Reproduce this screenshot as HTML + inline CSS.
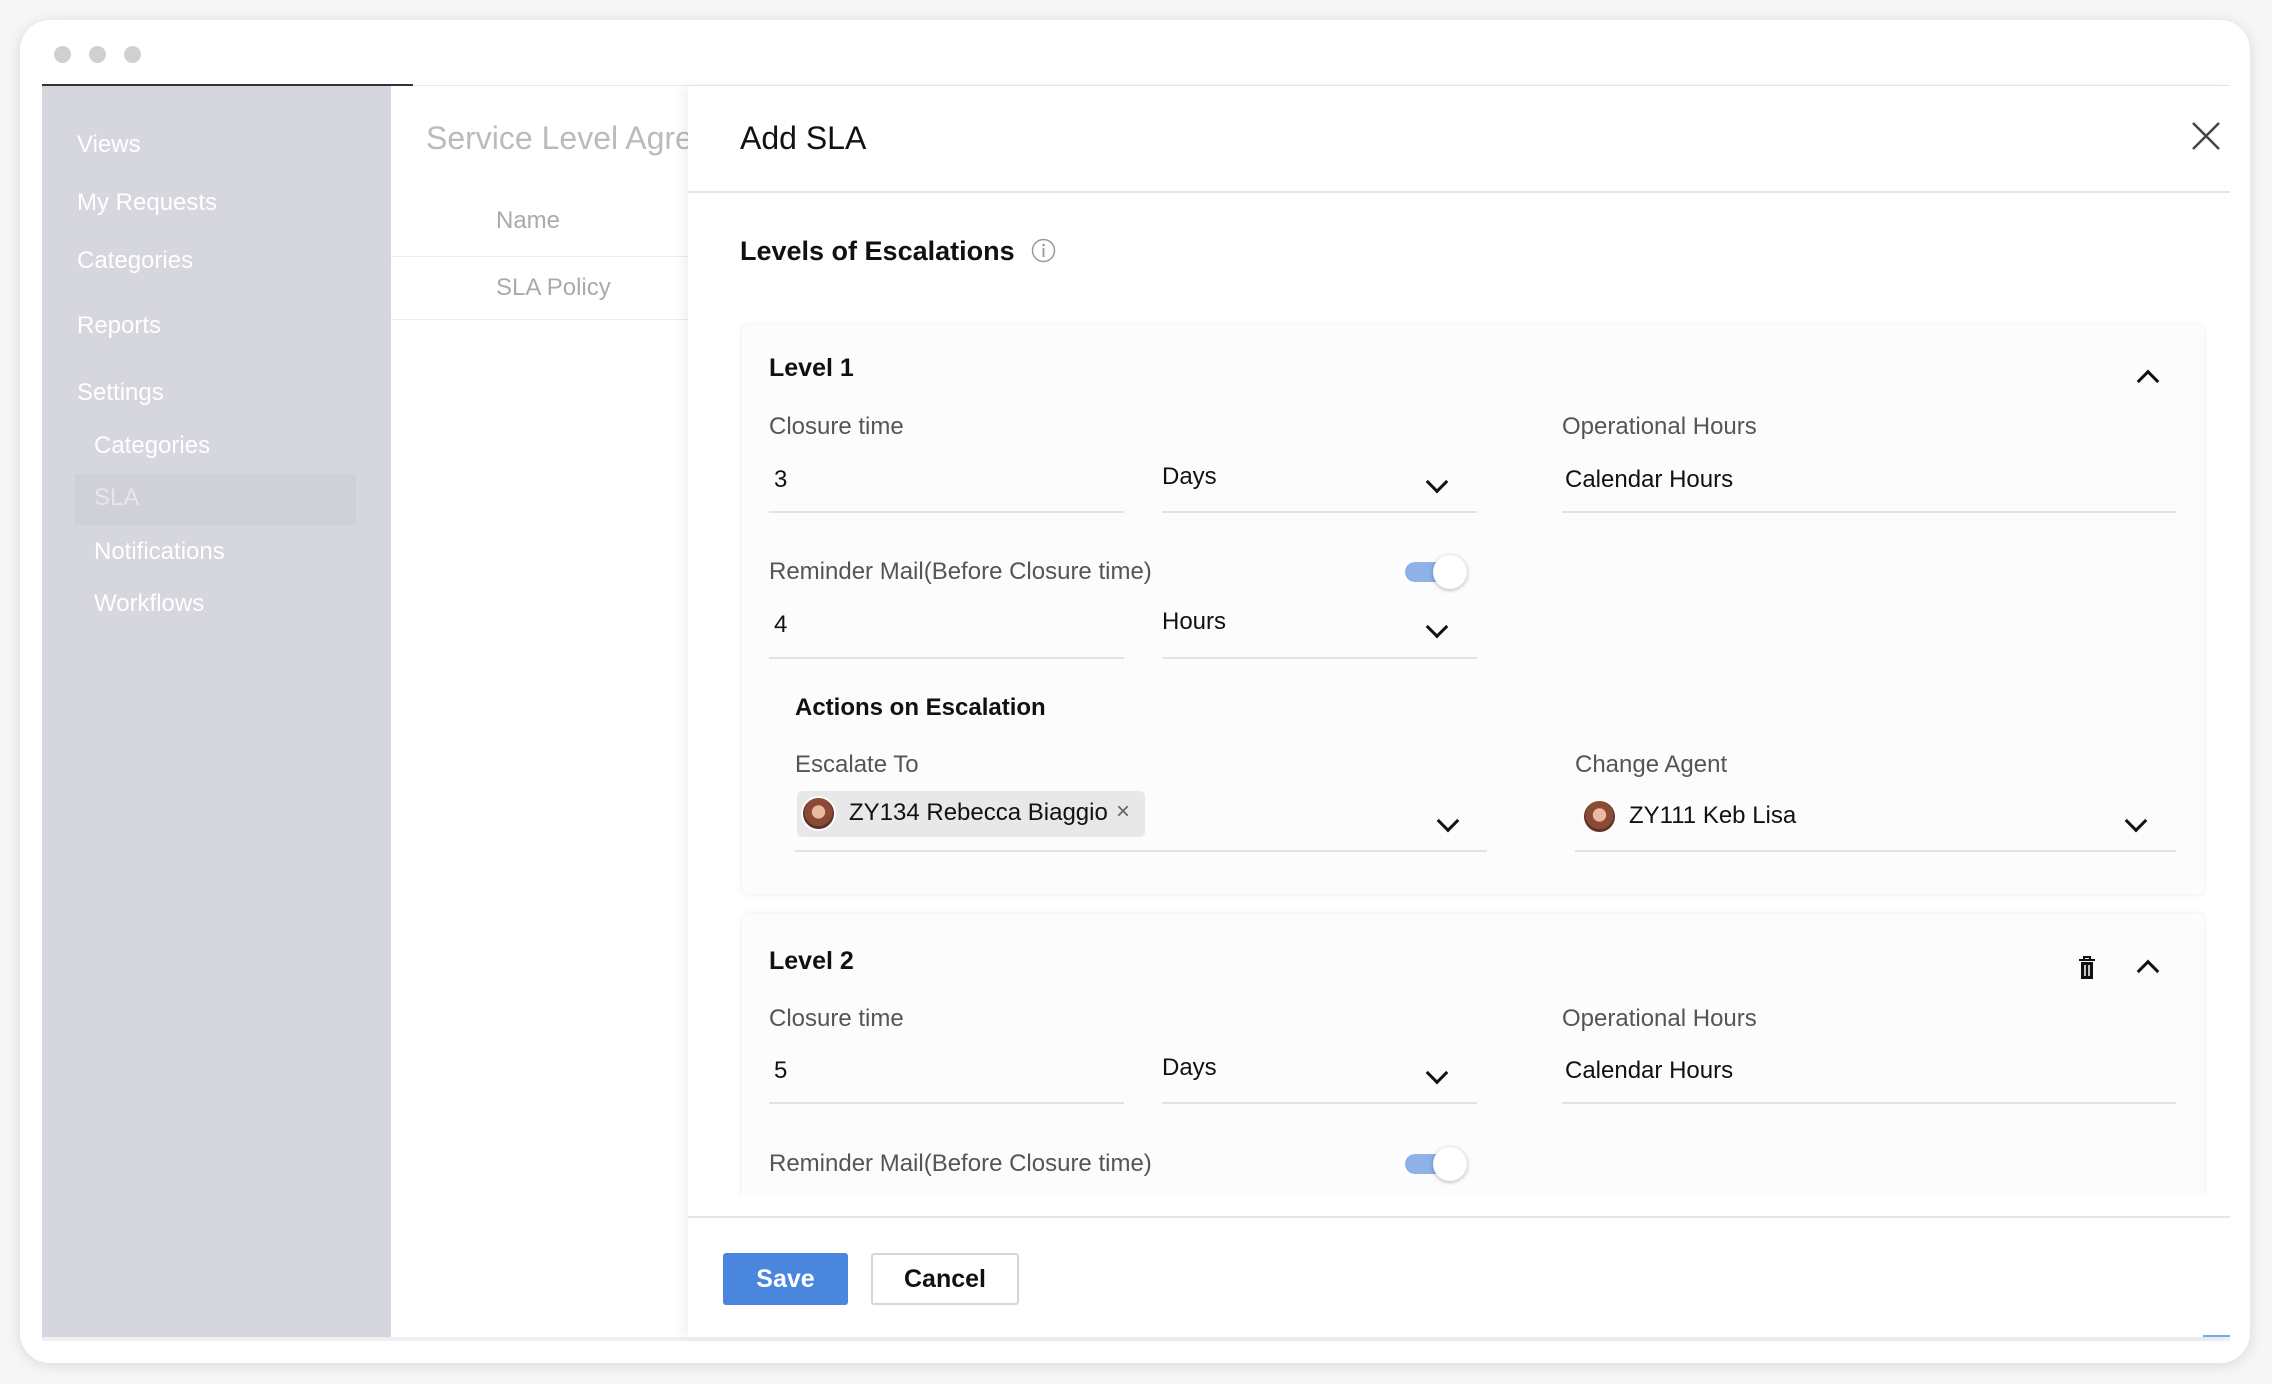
<!DOCTYPE html>
<html style="overflow:hidden;width:2272px;height:1384px"><head><meta charset="utf-8"><style>
*{margin:0;padding:0;box-sizing:border-box}
body{width:2272px;height:1384px;background:#f6f6f6;font-family:"Liberation Sans",sans-serif;position:relative;overflow:hidden}
.a{position:absolute;white-space:nowrap}
.win{position:absolute;left:20px;top:20px;width:2230px;height:1343px;background:#fff;border-radius:30px;box-shadow:0 2px 14px rgba(0,0,0,.12)}
.dot{position:absolute;top:46px;width:17px;height:17px;border-radius:50%;background:#d0d0d0}
.side{color:#fff;font-size:24px}
.lbl{color:#555;font-size:24px}
.val{color:#111;font-size:24px}
.ul{position:absolute;height:2px;background:#e2e2e2}
.chev{position:absolute;width:16px;height:16px;border-right:3.5px solid #111;border-bottom:3.5px solid #111;transform:rotate(45deg)}
.chup{position:absolute;width:16px;height:16px;border-left:3.5px solid #111;border-top:3.5px solid #111;transform:rotate(45deg)}
.tog{position:absolute;width:62px;height:34px}
.tog .t{position:absolute;left:0;top:7px;width:50px;height:20px;border-radius:10px;background:#8eb1e8}
.tog .k{position:absolute;left:28px;top:0;width:34px;height:34px;border-radius:50%;background:#fff;box-shadow:0 1px 4px rgba(0,0,0,.3)}
.card{position:absolute;left:742px;width:1462px;background:#fcfcfc;border-radius:6px;box-shadow:0 0 6px rgba(0,0,0,.09)}
.av{position:absolute;width:35px;height:35px;border-radius:50%;background:radial-gradient(circle at 50% 45%,#e9b9a0 0 28%,#8a4a35 30% 60%,#5b3428 62%);border:2px solid #fff}
</style></head><body>
<div class="win"></div>
<div class="dot" style="left:54px"></div><div class="dot" style="left:89px"></div><div class="dot" style="left:124px"></div>
<div class="a" style="left:42px;top:84px;width:371px;height:2px;background:#333"></div>
<div class="a" style="left:413px;top:85px;width:1817px;height:1px;background:#e8e8e8"></div>
<div class="a" style="left:42px;top:86px;width:349px;height:1251px;background:#d5d6de"></div>
<div class="a" style="left:75px;top:474px;width:281px;height:51px;background:#cfd0d8"></div>
<div class="a side" style="left:77px;top:131px">Views</div>
<div class="a side" style="left:77px;top:189px">My Requests</div>
<div class="a side" style="left:77px;top:247px">Categories</div>
<div class="a side" style="left:77px;top:312px">Reports</div>
<div class="a side" style="left:77px;top:379px">Settings</div>
<div class="a side" style="left:94px;top:432px">Categories</div>
<div class="a side" style="left:94px;top:484px;color:#e6e6ec">SLA</div>
<div class="a side" style="left:94px;top:538px">Notifications</div>
<div class="a side" style="left:94px;top:590px">Workflows</div>
<div class="a" style="left:391px;top:86px;width:297px;height:1251px;background:#fff;overflow:hidden">
<div class="a" style="left:35px;top:34px;font-size:32px;color:#bbb">Service Level Agreement</div>
<div class="a" style="left:105px;top:121px;font-size:24px;color:#aaa">Name</div>
<div class="a" style="left:0;top:170px;width:297px;height:1px;background:#eee"></div>
<div class="a" style="left:105px;top:188px;font-size:24px;color:#aaa">SLA Policy</div>
<div class="a" style="left:0;top:233px;width:297px;height:1px;background:#eee"></div>
</div>
<div class="a" style="left:42px;top:1337px;width:2188px;height:4px;background:#eef0f4"></div>
<div class="a" style="left:688px;top:86px;width:1542px;height:1251px;background:#fff;box-shadow:-6px 0 10px rgba(0,0,0,.05)"></div>
<div class="a" style="left:740px;top:120px;font-size:32px;color:#111">Add SLA</div>
<svg class="a" style="left:2191px;top:121px" width="30" height="30"><path d="M2 2L28 28M28 2L2 28" stroke="#444" stroke-width="2.5"/></svg>
<div class="a" style="left:688px;top:191px;width:1542px;height:2px;background:#e6e6e6"></div>
<div class="a" style="left:740px;top:236px;font-size:27px;font-weight:bold;color:#111">Levels of Escalations<svg style="margin-left:16px;vertical-align:-3px" width="25" height="25"><circle cx="12.5" cy="12.5" r="11" fill="none" stroke="#999" stroke-width="1.5"/><path d="M12.5 10v9" stroke="#999" stroke-width="1.8"/><circle cx="12.5" cy="7" r="1.3" fill="#999"/></svg></div>
<div class="a" style="left:688px;top:300px;width:1542px;height:895px;overflow:hidden">
<div style="position:absolute;left:-688px;top:-300px;width:2272px;height:1195px">
<div class="card" style="top:325px;height:569px"></div>
<div class="a" style="left:769px;top:354px;font-size:25px;font-weight:bold;color:#111">Level 1</div>
<div class="chup" style="left:2140px;top:373px"></div>
<div class="a lbl" style="left:769px;top:413px">Closure time</div>
<div class="a val" style="left:774px;top:466px">3</div>
<div class="ul" style="left:769px;top:511px;width:355px"></div>
<div class="a val" style="left:1162px;top:463px">Days</div>
<div class="chev" style="left:1429px;top:474px"></div>
<div class="ul" style="left:1162px;top:511px;width:315px"></div>
<div class="a lbl" style="left:1562px;top:413px">Operational Hours</div>
<div class="a val" style="left:1565px;top:466px">Calendar Hours</div>
<div class="ul" style="left:1562px;top:511px;width:614px"></div>
<div class="a lbl" style="left:769px;top:558px">Reminder Mail(Before Closure time)</div>
<div class="tog" style="left:1405px;top:555px"><div class="t"></div><div class="k"></div></div>
<div class="a val" style="left:774px;top:611px">4</div>
<div class="a val" style="left:1162px;top:608px">Hours</div>
<div class="chev" style="left:1429px;top:619px"></div>
<div class="ul" style="left:769px;top:657px;width:355px"></div>
<div class="ul" style="left:1162px;top:657px;width:315px"></div>
<div class="a" style="left:795px;top:694px;font-size:24px;font-weight:bold;color:#111">Actions on Escalation</div>
<div class="a lbl" style="left:795px;top:751px">Escalate To</div>
<div class="a" style="left:797px;top:791px;width:348px;height:46px;background:#e8e8e8;border-radius:5px"></div>
<div class="av" style="left:801px;top:796px"></div>
<div class="a val" style="left:849px;top:799px">ZY134 Rebecca Biaggio</div>
<div class="a" style="left:1116px;top:798px;font-size:24px;color:#666">×</div>
<div class="chev" style="left:1440px;top:813px"></div>
<div class="ul" style="left:795px;top:850px;width:692px"></div>
<div class="a lbl" style="left:1575px;top:751px">Change Agent</div>
<div class="av" style="left:1582px;top:799px"></div>
<div class="a val" style="left:1629px;top:802px">ZY111 Keb Lisa</div>
<div class="chev" style="left:2128px;top:813px"></div>
<div class="ul" style="left:1575px;top:850px;width:601px"></div>
<div class="card" style="top:914px;height:300px"></div>
<div class="a" style="left:769px;top:947px;font-size:25px;font-weight:bold;color:#111">Level 2</div>
<svg class="a" style="left:2078px;top:956px" width="18" height="24"><path d="M1 4h16M6 4V1h6v3" stroke="#111" stroke-width="2" fill="none"/><rect x="3" y="6" width="12" height="17" fill="#111"/><path d="M7 9v11M11 9v11" stroke="#fff" stroke-width="1.5"/></svg>
<div class="chup" style="left:2140px;top:963px"></div>
<div class="a lbl" style="left:769px;top:1005px">Closure time</div>
<div class="a val" style="left:774px;top:1057px">5</div>
<div class="ul" style="left:769px;top:1102px;width:355px"></div>
<div class="a val" style="left:1162px;top:1054px">Days</div>
<div class="chev" style="left:1429px;top:1065px"></div>
<div class="ul" style="left:1162px;top:1102px;width:315px"></div>
<div class="a lbl" style="left:1562px;top:1005px">Operational Hours</div>
<div class="a val" style="left:1565px;top:1057px">Calendar Hours</div>
<div class="ul" style="left:1562px;top:1102px;width:614px"></div>
<div class="a lbl" style="left:769px;top:1150px">Reminder Mail(Before Closure time)</div>
<div class="tog" style="left:1405px;top:1147px"><div class="t"></div><div class="k"></div></div>
</div></div>
<div class="a" style="left:688px;top:1216px;width:1542px;height:2px;background:#e6e6e6"></div>
<div class="a" style="left:723px;top:1253px;width:125px;height:52px;background:#4a86de;border-radius:3px;color:#fff;font-size:25px;font-weight:bold;text-align:center;line-height:52px">Save</div>
<div class="a" style="left:871px;top:1253px;width:148px;height:52px;background:#fff;border:2px solid #d6d6d6;border-radius:3px;color:#111;font-size:25px;font-weight:bold;text-align:center;line-height:48px">Cancel</div>
<div class="a" style="left:2203px;top:1335px;width:27px;height:2px;background:#7aa7e8"></div>
</body></html>
